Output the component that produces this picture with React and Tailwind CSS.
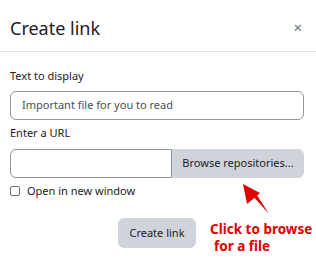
import React from 'react'

const App = () => {
  return (
    <div className="relative w-[316px] h-[259px] bg-white text-[#1d2125] font-['Noto_Sans',sans-serif] overflow-hidden">
      {/* Header */}
      <div className="flex items-center justify-between h-[52px] pl-[10px] pr-[14px] border-b border-[#dee2e6]">
        <h2 className="text-[18px] leading-none pt-[4px]">Create link</h2>
        <span className="text-[#6a737b] text-[15px] leading-none pt-[4px]">×</span>
      </div>

      {/* Body */}
      <div className="px-[10px] pt-[14px]">
        <label className="block text-[11px] leading-[20px]">Text to display</label>
        <div className="mt-[5px] h-[29px] w-[294px] border border-[#8f959e] rounded-[6px] flex items-center px-[11px] text-[11px] text-[#495057]">
          Important file for you to read
        </div>

        <label className="block mt-[3px] text-[11px] leading-[20px]">Enter a URL</label>
        <div className="mt-[6px] flex h-[29px] w-[294px]">
          <div className="w-[162px] border border-[#8f959e] rounded-l-[6px]"></div>
          <div className="flex-1 bg-[#ced4da] rounded-r-[6px] flex items-center justify-center text-[11px]">
            Browse repositories...
          </div>
        </div>

        <div className="mt-[3px] flex items-center gap-[7px] text-[11px] leading-[20px]">
          <span className="w-[10px] h-[10px] border border-[#6a737b] rounded-[2px]"></span>
          Open in new window
        </div>

        <div className="mt-[17px] flex">
          <div className="ml-[108px] w-[78px] h-[30px] bg-[#ced4da] rounded-[6px] flex items-center justify-center text-[11px]">
            Create link
          </div>
        </div>
      </div>

      {/* Annotation */}
      <svg className="absolute left-0 top-0" width="316" height="259">
        <polygon points="252,195 255,192 269,214" fill="#e00000" />
        <polygon points="243,184 260,193 247,204" fill="#e00000" />
      </svg>
      <div className="absolute left-[210px] top-[221px] text-[#e00000] font-bold text-[13.5px] leading-[17px]">
        <div>Click to browse</div>
        <div className="pl-[4px]">for a file</div>
      </div>
    </div>
  )
}

export default App
